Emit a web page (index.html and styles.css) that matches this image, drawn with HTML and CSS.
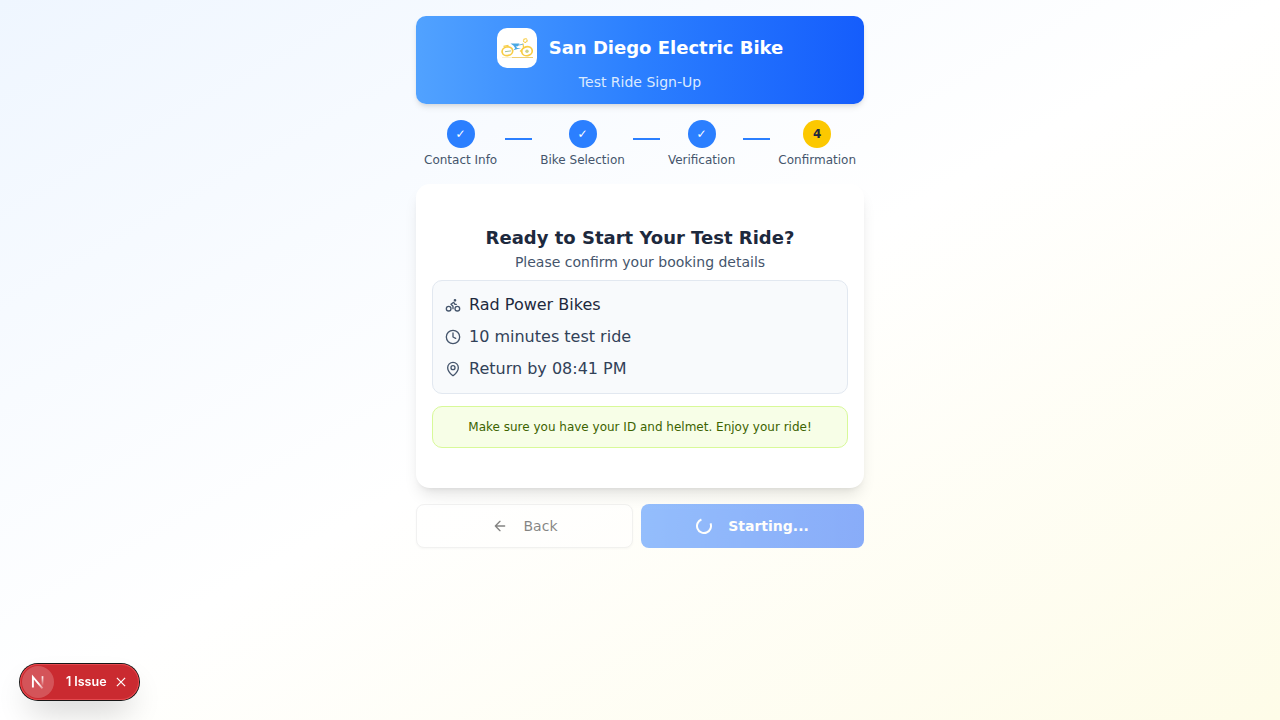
FILE: index.html
```html
<!DOCTYPE html>
<html lang="en">
<head>
<meta charset="utf-8">
<title>San Diego Electric Bike</title>
<link rel="stylesheet" href="styles.css">
</head>
<body>
<main class="page">
  <header class="banner">
    <div class="brand">
      <div class="logo">
        <svg width="34" height="24" viewBox="0 0 34 24" fill="none">
          <g stroke="#f8cd45">
            <ellipse cx="7.4" cy="15.2" rx="5.3" ry="4.3" stroke-width="1.7" transform="rotate(-12 7.4 15.2)"/>
            <ellipse cx="27" cy="15.2" rx="5.3" ry="4.5" stroke-width="1.7" transform="rotate(-12 27 15.2)"/>
            <circle cx="25.3" cy="4.5" r="1.8" stroke-width="1.3" stroke-dasharray="1.5 .4"/>
            <path d="M20 15.5l3.6-3.4L23 7.5M3.5 10.3l5-.9" stroke-width="1.2"/>
          </g>
          <circle cx="27" cy="15.3" r="1.7" fill="#ccd083"/>
          <path d="M10.5 7.6h9l-1.6 2.7-2 .2 1.3 1.5 3.8.1-7.6 2.2 1.8-2-1.6-2.6z" fill="#49a8e4"/>
          <path d="M18 9.2l5-1" stroke="#78b8d5" stroke-width="1"/>
          <path d="M5 15.7l6-.8" stroke="#9fc09d" stroke-width="1"/>
          <path d="M2 21.5h11" stroke="#f9e8b5" stroke-width=".7"/>
          <path d="M12 21.5h21" stroke="#edca60" stroke-width=".9"/>
        </svg>
      </div>
      <h1>San Diego Electric Bike</h1>
    </div>
    <p>Test Ride Sign-Up</p>
  </header>

  <nav class="steps">
    <div class="step"><span class="dot">✓</span><span>Contact Info</span></div>
    <i class="line"></i>
    <div class="step"><span class="dot">✓</span><span>Bike Selection</span></div>
    <i class="line"></i>
    <div class="step"><span class="dot">✓</span><span>Verification</span></div>
    <i class="line"></i>
    <div class="step"><span class="dot current">4</span><span>Confirmation</span></div>
  </nav>

  <section class="card">
    <h2>Ready to Start Your Test Ride?</h2>
    <p class="sub">Please confirm your booking details</p>
    <div class="details">
      <div class="row strong">
        <svg class="icon" viewBox="0 0 24 24"><circle cx="18.5" cy="17.5" r="3.5"/><circle cx="5.5" cy="17.5" r="3.5"/><circle cx="15" cy="5" r="1"/><path d="M12 17.5V14l-3-3 4-3 2 3h2"/></svg>
        <span>Rad Power Bikes</span>
      </div>
      <div class="row">
        <svg class="icon" viewBox="0 0 24 24"><circle cx="12" cy="12" r="10"/><path d="M12 6v6l4 2"/></svg>
        <span>10 minutes test ride</span>
      </div>
      <div class="row">
        <svg class="icon" viewBox="0 0 24 24"><path d="M20 10c0 4.993-5.539 10.193-7.399 11.799a1 1 0 0 1-1.202 0C9.539 20.193 4 14.993 4 10a8 8 0 0 1 16 0"/><circle cx="12" cy="10" r="3"/></svg>
        <span>Return by 08:41 PM</span>
      </div>
    </div>
    <p class="note">Make sure you have your ID and helmet. Enjoy your ride!</p>
  </section>

  <div class="actions">
    <button class="btn back" disabled>
      <svg class="icon" viewBox="0 0 24 24"><path d="m12 19-7-7 7-7M19 12H5"/></svg>
      <span>Back</span>
    </button>
    <button class="btn start" disabled>
      <svg class="spinner" viewBox="0 0 16 16"><path d="M14.5 5.4A7 7 0 1 1 5.4 1.5"/></svg>
      <span>Starting...</span>
    </button>
  </div>
</main>

<aside class="issues">
  <span class="mark">
    <svg width="18" height="18" viewBox="0 0 18 18" fill="none">
      <defs>
        <linearGradient id="diag" x1="10" y1="10" x2="15" y2="16" gradientUnits="userSpaceOnUse"><stop stop-color="#fff"/><stop offset="1" stop-color="#fff" stop-opacity=".2"/></linearGradient>
        <linearGradient id="stem" x1="0" y1="3" x2="0" y2="13" gradientUnits="userSpaceOnUse"><stop stop-color="#fff"/><stop offset="1" stop-color="#fff" stop-opacity="0"/></linearGradient>
      </defs>
      <path d="M3.9 14.4V4l9.6 11.4" stroke="url(#diag)" stroke-width="1.9"/>
      <path d="M13.5 3.2v9.6" stroke="url(#stem)" stroke-width="1.7"/>
    </svg>
  </span>
  <span class="count"><span>1</span><span>Issue</span></span>
  <svg class="close" width="10" height="10" viewBox="0 0 10 10"><path d="M.9.9l8.2 8.2M9.1.9.9 9.1"/></svg>
</aside>
</body>
</html>
```

FILE: styles.css
```css
* { box-sizing: border-box; margin: 0; padding: 0; }

body {
  min-height: 100vh;
  font-family: "DejaVu Sans", sans-serif;
  background: linear-gradient(to bottom right, #eff6ff, #fff, #fefce8);
}

.page {
  display: flex;
  flex-direction: column;
  gap: 16px;
  width: 448px;
  margin: 0 auto;
  padding-top: 16px;
}

.banner {
  height: 88px;
  padding: 12px;
  border-radius: 10px;
  background: linear-gradient(to right, #51a2ff, #2b7fff, #155dfc);
  box-shadow: 0 4px 6px -1px rgba(0, 0, 0, .1), 0 2px 4px -2px rgba(0, 0, 0, .1);
  color: #fff;
  text-align: center;
}
.brand { display: flex; align-items: center; justify-content: center; gap: 12px; margin-bottom: 4px; }
.logo {
  display: flex;
  align-items: center;
  justify-content: center;
  width: 40px;
  height: 40px;
  border-radius: 10px;
  background: #fff;
}
h1, h2 { font-size: 18px; line-height: 28px; font-weight: 700; }
.banner p { font-size: 14px; line-height: 20px; color: #dbeafe; }

.steps { display: flex; align-items: flex-start; padding: 0 8px; }
.step {
  display: flex;
  flex-direction: column;
  align-items: center;
  gap: 4px;
  font-size: 12px;
  line-height: 16px;
  color: #45556c;
}
.dot {
  width: 28px;
  height: 28px;
  border-radius: 50%;
  background: #2b7fff;
  color: #fff;
  font-weight: 700;
  line-height: 28px;
  text-align: center;
}
.dot.current { background: #fcc800; color: #1d293d; }
.line { flex: 1; height: 2px; margin: 18px 8px 0; background: #2b7fff; }

.card {
  height: 304px;
  padding: 40px 16px;
  border-radius: 14px;
  background: #fff;
  box-shadow: 0 10px 15px -3px rgba(0, 0, 0, .1), 0 4px 6px -4px rgba(0, 0, 0, .1);
  text-align: center;
}
h2 { color: #1d293d; }
.sub { font-size: 14px; line-height: 20px; color: #45556c; }
.details {
  display: flex;
  flex-direction: column;
  gap: 8px;
  margin: 8px 0 12px;
  padding: 12px;
  border: 1px solid #e2e8f0;
  border-radius: 10px;
  background: #f8fafc;
}
.row { display: flex; align-items: center; gap: 8px; font-size: 16px; line-height: 24px; color: #314158; }
.row.strong { color: #1d293d; }
.row .icon { color: #45556c; }
.icon, .spinner {
  width: 16px;
  height: 16px;
  fill: none;
  stroke: currentColor;
  stroke-width: 2;
  stroke-linecap: round;
  stroke-linejoin: round;
}
.note {
  padding: 12px;
  border: 1px solid #d8f999;
  border-radius: 10px;
  background: #f7fee7;
  color: #3c6300;
  font-size: 12px;
  line-height: 16px;
}

.actions { display: grid; grid-template-columns: 217px 223px; gap: 8px; }
.btn {
  display: flex;
  align-items: center;
  justify-content: center;
  gap: 16px;
  height: 44px;
  border: 0;
  border-radius: 8px;
  font: 14px/20px "DejaVu Sans", sans-serif;
  opacity: .5;
}
.back { border: 1px solid #e5e5e5; background: #fff; color: #0a0a0a; box-shadow: 0 1px 2px rgba(0, 0, 0, .05); }
.start { background: linear-gradient(to right, #2b7fff, #155dfc); color: #fff; font-weight: 700; }
.spinner { stroke-linecap: butt; }

.issues {
  position: fixed;
  left: 20px;
  bottom: 20px;
  display: flex;
  align-items: center;
  width: 119px;
  height: 36px;
  padding: 2px;
  border-radius: 18px;
  background: #ca2a30;
  box-shadow: 0 0 0 1px #171717, inset 0 0 0 1px #e5484d, 0 16px 32px -8px rgba(0, 0, 0, .24);
  color: #fff;
  font: 600 12.5px/16px Inter, sans-serif;
}
.mark {
  display: flex;
  align-items: center;
  justify-content: center;
  width: 32px;
  height: 32px;
  border-radius: 50%;
  background: rgba(255, 255, 255, .2);
}
.count { display: flex; gap: 3px; width: 41px; margin-left: 12px; }
.close { margin-left: 9px; fill: none; stroke: #fff; stroke-width: 1.2; }
```
